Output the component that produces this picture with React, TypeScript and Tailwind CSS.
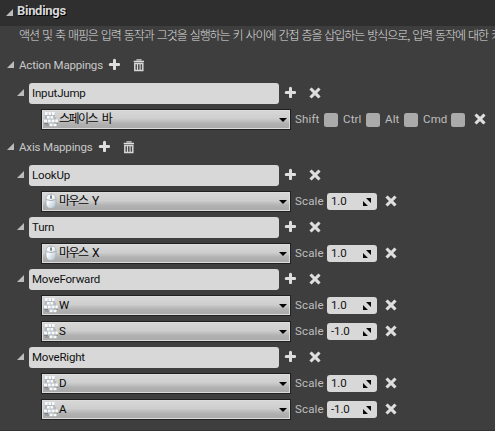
import type { ReactNode } from "react";

function Expander({ className = "" }: { className?: string }) {
  return (
    <svg className={`block shrink-0 ${className}`} width="8" height="8" viewBox="0 0 8 8">
      <path d="M7 0V7H0Z" fill="#bcbcbc" />
    </svg>
  );
}

function Plus({ className = "" }: { className?: string }) {
  return (
    <svg className={`block shrink-0 ${className}`} width="12" height="12" viewBox="0 0 12 12">
      <path d="M6.5 2.2V10.8M2.2 6.5H10.8" stroke="#dedede" strokeWidth="3" strokeLinecap="round" />
    </svg>
  );
}

function Cross({ className = "" }: { className?: string }) {
  return (
    <svg className={`block shrink-0 ${className}`} width="12" height="12" viewBox="0 0 12 12">
      <path d="M2.6 2.6L9.4 9.4M9.4 2.6L2.6 9.4" stroke="#dedede" strokeWidth="3.1" strokeLinecap="square" />
    </svg>
  );
}

function Trash({ className = "" }: { className?: string }) {
  return (
    <svg className={`block shrink-0 ${className}`} width="12" height="13" viewBox="0 0 12 13">
      <path d="M4 1.5V0.8H8V1.5" fill="none" stroke="#d6d6d6" strokeWidth="1.2" />
      <path d="M0.7 2.5H11" stroke="#dedede" strokeWidth="1.5" />
      <path d="M1.8 4.5V11.4H9.8V4.5Z" fill="#4a4a4a" stroke="#d6d6d6" strokeWidth="1.5" />
      <path d="M4.5 4.5V11M7.1 4.5V11" stroke="#d6d6d6" strokeWidth="1.1" />
    </svg>
  );
}

function Keyboard() {
  return (
    <svg className="block shrink-0" width="16" height="16" viewBox="0 0 16 16">
      <path d="M2 2H12V6H13V10H15V14H7L1 12Z" fill="#b4b9bd" />
      <path d="M1 12.5H5M2 14H6M11 12.3H15" stroke="#808487" strokeWidth="1.1" />
      <g fill="#f6fafc">
        <rect x="2" y="1" width="2.7" height="3" />
        <rect x="5.5" y="1" width="2.7" height="3" />
        <rect x="9" y="1" width="2.7" height="3" />
        <rect x="4" y="5" width="2.7" height="2.6" />
        <rect x="7.5" y="5" width="2.7" height="2.6" />
        <rect x="1" y="8.5" width="3" height="2.8" />
        <rect x="4.8" y="8.5" width="3" height="2.8" />
        <rect x="8.6" y="8.5" width="3" height="2.8" />
        <rect x="12.3" y="8.5" width="2.5" height="2.8" />
        <rect x="6.6" y="12.6" width="3" height="2.6" />
        <rect x="10.5" y="12.6" width="3" height="2.6" />
      </g>
    </svg>
  );
}

function Mouse() {
  return (
    <svg className="block shrink-0" width="16" height="16" viewBox="0 0 16 16">
      <defs>
        <linearGradient id="mouse" x1="0" y1="0" x2="1" y2="1">
          <stop offset="0.4" stopColor="#f7fafc" />
          <stop offset="1" stopColor="#a9bbc8" />
        </linearGradient>
      </defs>
      <path d="M3 6C3 2.6 5 1 8 1S13 2.6 13 6V10C13 13.6 11 15.5 8 15.5S3 13.6 3 10Z" fill="url(#mouse)" stroke="#a3aeb5" strokeWidth="0.8" />
      <path d="M3.3 6.6Q8 8.4 12.7 6.6M8 1V3" fill="none" stroke="#99a4ab" strokeWidth="0.9" />
      <rect x="7.2" y="2.4" width="1.6" height="3.6" rx="0.8" fill="#68727a" />
    </svg>
  );
}

function Section({ label, wide }: { label: string; wide?: boolean }) {
  return (
    <div className="flex h-[30px] items-center pl-[7px]">
      <Expander />
      <span className={`ml-1 shrink-0 whitespace-nowrap text-[#c8c8c8] ${wide ? "w-[89px] tracking-[-0.18px]" : "w-[79px] tracking-[-0.15px]"}`}>{label}</span>
      <Plus className="-mt-0.5" />
      <Trash className="ml-[13px]" />
    </div>
  );
}

function Mapping({ name }: { name: string }) {
  return (
    <div className="flex h-[26px] items-center pl-[17px] pt-px">
      <Expander className="-mt-0.5" />
      <div className="ml-1 flex h-[21px] w-[250px] items-center rounded-[3px] bg-[#d8d8d8] pl-[3px] pb-px tracking-[-0.18px] text-[#111]">{name}</div>
      <Plus className="-mt-1 ml-[5px]" />
      <Cross className="-mt-0.5 ml-[13px]" />
    </div>
  );
}

function KeyRow({ keyName, mouse, children }: { keyName: string; mouse?: boolean; children: ReactNode }) {
  return (
    <div className="flex h-[26px] items-center pl-[41px]">
      <div className="flex h-[21px] w-[250px] items-center border border-[#202020] bg-[linear-gradient(#d8d8d8,#cecece_45%,#b2b2b2_70%,#a8a8a8)] pl-px pr-[3px] text-[#080808] shadow-[inset_0_0_0_1px_#dcdcdc]">
        {mouse ? <Mouse /> : <Keyboard />}
        <span className={keyName.length > 1 ? "-mt-px flex-1 text-[12px] tracking-[-1.5px] [word-spacing:3px]" : "-mt-px flex-1"}>{keyName}</span>
        <svg width="8" height="4" viewBox="0 0 8 4" className="mt-px block">
          <path d="M0 0H8L4 4Z" fill="#050505" />
        </svg>
      </div>
      <div className="flex h-full items-center pl-1 tracking-[0.15px] text-[#bfbfbf]">{children}</div>
    </div>
  );
}

function Scale({ value }: { value: string }) {
  return (
    <>
      <span className="-mt-px w-8 shrink-0">Scale</span>
      <div className="mt-px flex h-[17px] w-[50px] items-center justify-between rounded-[3px] bg-[#d8d8d8] pl-[4px] pr-[6px] tracking-[-0.1px] text-[#111]">
        <span className="-mt-0.5">{value}</span>
        <svg width="8" height="8" viewBox="0 0 8 8" className="mt-px block">
          <path d="M3 0H8V5ZM0 3L5 8H0Z" fill="#080808" />
        </svg>
      </div>
      <Cross className="ml-[8px]" />
    </>
  );
}

function Modifier({ label, className }: { label: string; className: string }) {
  return (
    <>
      <span className={`-mt-px shrink-0 ${className}`}>{label}</span>
      <span className="mr-[5px] mt-px size-[14px] shrink-0 rounded-[2.5px] bg-[#aaa]" />
    </>
  );
}

export default function App() {
  return (
    <main className="h-[431px] w-[495px] overflow-hidden border-b border-[#343434] bg-[#3e3e3e] font-[Roboto,'Noto_Sans_CJK_KR',sans-serif] text-[11.5px] leading-4">
      <header className="flex h-[26px] items-center bg-[#2f2f2f] pb-1 pl-[6px]">
        <Expander className="mt-1" />
        <h1 className="ml-[3px] text-[13px] font-bold tracking-[-0.3px] text-[#d8d8d8] [text-shadow:1px_1px_0_#000]">Bindings</h1>
      </header>
      <p className="h-6 whitespace-nowrap pl-[19px] font-['Noto_Sans_CJK_KR',sans-serif] text-[12px] leading-[17px] font-light tracking-[-1.06px] text-[#dedede] [word-spacing:1.4px]">
        액션 및 축 매핑은 입력 동작과 그것을 실행하는 키 사이에 간접 층을 삽입하는 방식으로, 입력 동작에 대한 키
      </p>
      <Section label="Action Mappings" wide />
      <Mapping name="InputJump" />
      <KeyRow keyName="스페이스 바">
        <Modifier label="Shift" className="w-[29px]" />
        <Modifier label="Ctrl" className="w-[23px]" />
        <Modifier label="Alt" className="w-[19px]" />
        <Modifier label="Cmd" className="w-[28px]" />
        <Cross className="ml-1" />
      </KeyRow>
      <Section label="Axis Mappings" />
      <Mapping name="LookUp" />
      <KeyRow keyName="마우스 Y" mouse><Scale value="1.0" /></KeyRow>
      <Mapping name="Turn" />
      <KeyRow keyName="마우스 X" mouse><Scale value="1.0" /></KeyRow>
      <Mapping name="MoveForward" />
      <KeyRow keyName="W"><Scale value="1.0" /></KeyRow>
      <KeyRow keyName="S"><Scale value="-1.0" /></KeyRow>
      <Mapping name="MoveRight" />
      <KeyRow keyName="D"><Scale value="1.0" /></KeyRow>
      <KeyRow keyName="A"><Scale value="-1.0" /></KeyRow>
    </main>
  );
}
